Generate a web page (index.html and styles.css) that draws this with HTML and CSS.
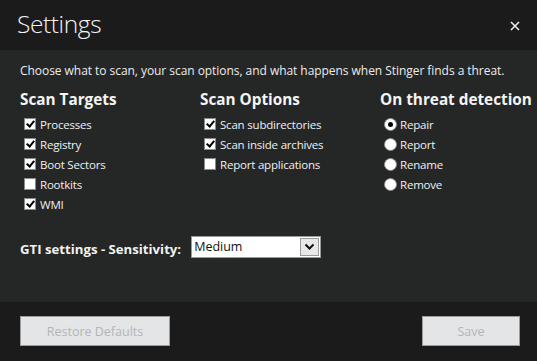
FILE: index.html
```html
<!DOCTYPE html>
<html>
<head>
<meta charset="utf-8">
<link rel="stylesheet" href="styles.css">
</head>
<body>
<div class="window">
  <div class="header">
    <div class="title">Settings</div>
    <svg class="close" width="10" height="10" viewBox="0 0 10 10"><path d="M1 1 L9 9 M9 1 L1 9" stroke="#f2f2f2" stroke-width="1.5" fill="none"/></svg>
  </div>
  <div class="content">
    <p class="intro">Choose what to scan, your scan options, and what happens when Stinger finds a threat.</p>
    <div class="columns">
      <div class="col">
        <h2 class="heading">Scan Targets</h2>
        <ul class="list">
          <li class="row"><span class="cb on"></span>Processes</li>
          <li class="row"><span class="cb on"></span>Registry</li>
          <li class="row"><span class="cb on"></span>Boot Sectors</li>
          <li class="row"><span class="cb"></span>Rootkits</li>
          <li class="row"><span class="cb on"></span>WMI</li>
        </ul>
      </div>
      <div class="col">
        <h2 class="heading">Scan Options</h2>
        <ul class="list">
          <li class="row"><span class="cb on"></span>Scan subdirectories</li>
          <li class="row"><span class="cb on"></span>Scan inside archives</li>
          <li class="row"><span class="cb"></span>Report applications</li>
        </ul>
      </div>
      <div class="col">
        <h2 class="heading">On threat detection</h2>
        <ul class="list">
          <li class="row"><span class="rb on"></span>Repair</li>
          <li class="row"><span class="rb"></span>Report</li>
          <li class="row"><span class="rb"></span>Rename</li>
          <li class="row"><span class="rb"></span>Remove</li>
        </ul>
      </div>
    </div>
    <div class="gti">
      <span class="gti-label">GTI settings - Sensitivity:</span>
      <div class="select">
        <span class="select-value">Medium</span>
        <span class="select-btn"><svg width="11" height="8" viewBox="0 0 11 8"><path d="M1.5 1.5 L5.5 5.5 L9.5 1.5" stroke="#111" stroke-width="2" fill="none"/></svg></span>
      </div>
    </div>
  </div>
  <div class="footer">
    <button class="btn btn-restore">Restore Defaults</button>
    <button class="btn btn-save">Save</button>
  </div>
</div>
</body>
</html>
```
FILE: styles.css
```css
* { box-sizing: border-box; }
html, body { margin: 0; padding: 0; }
body {
  width: 537px;
  height: 361px;
  overflow: hidden;
  font-family: "Open Sans", "Liberation Sans", sans-serif;
  color: #f2f2f2;
  background: #1b1b1b;
}
.window {
  width: 537px;
  height: 361px;
  display: flex;
  flex-direction: column;
}
.header {
  height: 50px;
  background: #1b1b1b;
  display: flex;
  justify-content: space-between;
  align-items: flex-start;
  padding: 9px 0 0 17px;
}
.title {
  font-size: 24.5px;
  font-weight: 300;
  line-height: 30px;
  letter-spacing: -0.4px;
  color: #f4f4f4;
}
.close {
  margin: 12px 17px 0 0;
}
.content {
  flex: 1;
  background: #252626;
  padding: 13px 20px 0 20px;
}
.intro {
  margin: 0;
  font-size: 12px;
  line-height: 16px;
  letter-spacing: -0.05px;
  color: #ececec;
  white-space: nowrap;
}
.columns {
  display: grid;
  grid-template-columns: 180px 180px 180px;
  margin-top: 10px;
}
.heading {
  margin: 0;
  font-size: 15.3px;
  font-weight: 700;
  line-height: 20px;
  color: #f4f4f4;
  white-space: nowrap;
}
.list {
  list-style: none;
  margin: 5px 0 0 0;
  padding: 0 0 0 4px;
}
.row {
  height: 20px;
  display: flex;
  align-items: center;
  font-size: 11.5px;
  letter-spacing: -0.2px;
  color: #f0f0f0;
  white-space: nowrap;
}
.cb {
  width: 12px;
  height: 12px;
  background: #ffffff;
  border: 1px solid #8a8a8a;
  margin-right: 4px;
  flex: none;
  position: relative;
}
.cb.on::after {
  content: "";
  position: absolute;
  left: 3px;
  top: 0px;
  width: 3px;
  height: 6px;
  border-right: 2px solid #000;
  border-bottom: 2px solid #000;
  transform: rotate(40deg);
}
.rb {
  width: 13px;
  height: 13px;
  border-radius: 50%;
  background: #ffffff;
  border: 1px solid #8a8a8a;
  margin-right: 3px;
  flex: none;
  display: flex;
  align-items: center;
  justify-content: center;
}
.rb.on::after {
  content: "";
  width: 5px;
  height: 5px;
  border-radius: 50%;
  background: #000;
}
.gti {
  display: flex;
  align-items: center;
  margin-top: 22px;
}
.gti-label {
  font-size: 13.2px;
  font-weight: 700;
  color: #f2f2f2;
  margin-right: 10px;
  padding-top: 3px;
}
.select {
  width: 130px;
  height: 22px;
  background: #ffffff;
  border: 1px solid #9a9a9a;
  display: flex;
  align-items: stretch;
  justify-content: space-between;
}
.select-value {
  font-size: 12.5px;
  color: #111;
  padding-left: 2px;
  line-height: 20px;
}
.select-btn {
  width: 19px;
  background: #e8e8e8;
  border: 1px solid #9a9a9a;
  margin: 1px;
  display: flex;
  align-items: center;
  justify-content: center;
}
.footer {
  height: 59px;
  background: #1b1b1b;
  display: flex;
  justify-content: space-between;
  align-items: flex-start;
  padding: 14px 17px 0 20px;
}
.btn {
  height: 30px;
  background: #e4e5e7;
  border: 1px solid #9c9c9c;
  font-family: "Open Sans", "Liberation Sans", sans-serif;
  font-size: 12.5px;
  color: #b2b6ba;
  padding: 0;
}
.btn-restore { width: 150px; }
.btn-save { width: 98px; }
```
